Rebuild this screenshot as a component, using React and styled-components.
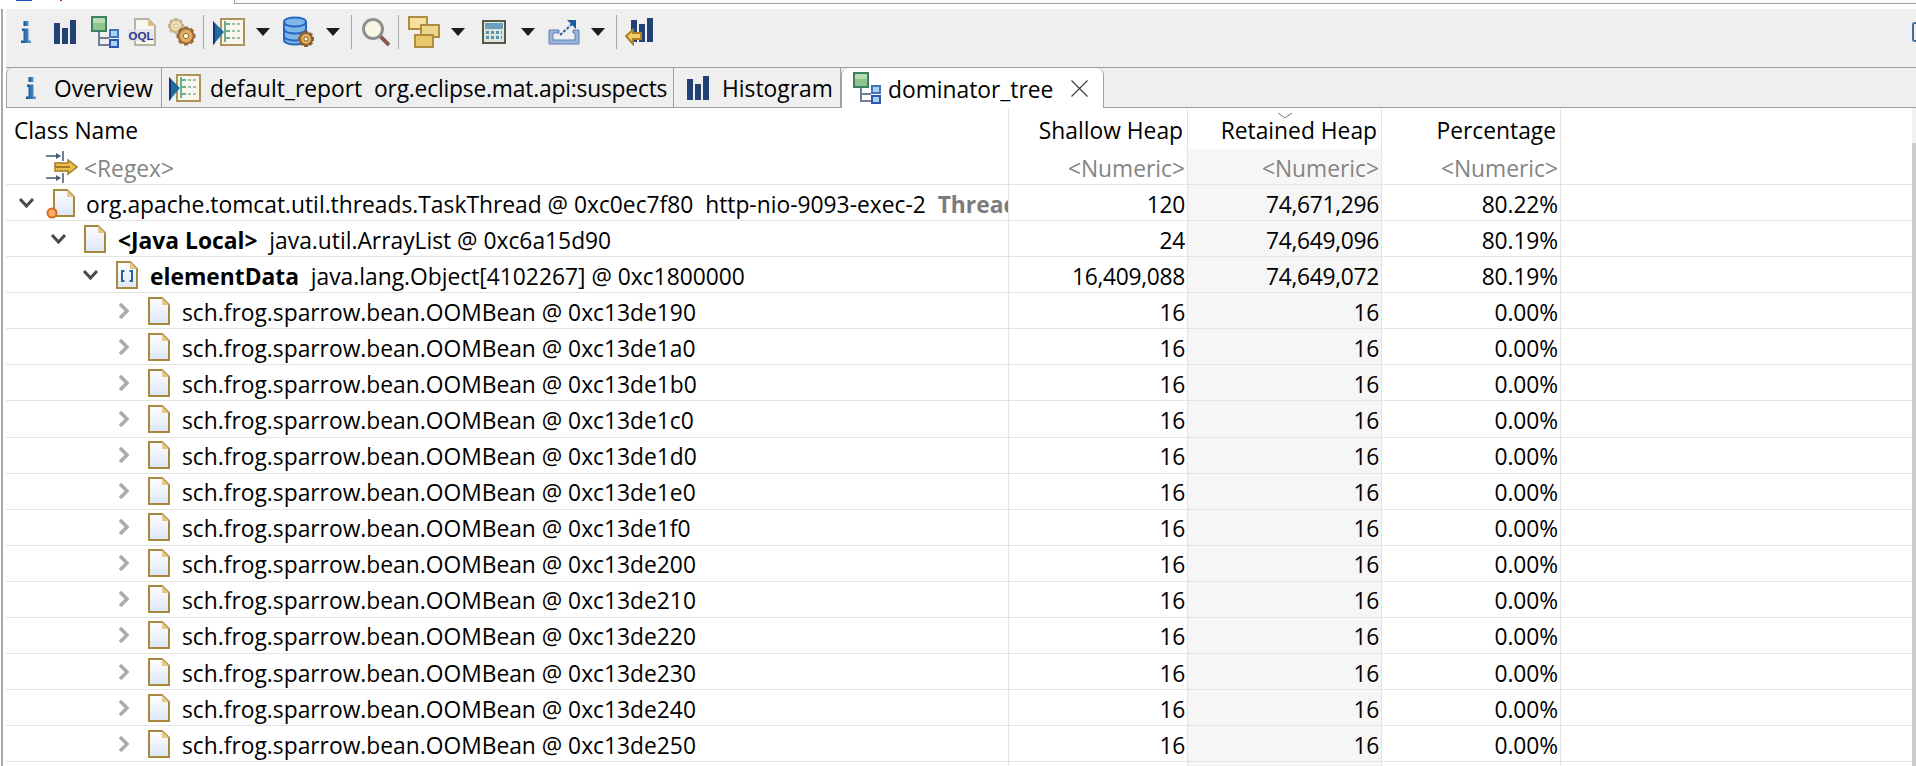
import React from 'react';
import styled, { createGlobalStyle } from 'styled-components';

const GlobalStyle = createGlobalStyle`
  html, body { margin: 0; padding: 0; background: #fff; }
  body { width: 1916px; height: 766px; overflow: hidden; }
`;

const FONT = `"Open Sans", "Noto Sans", "Liberation Sans", sans-serif`;
const TEXT_SIZE = '22.8px';

const Window = styled.div`
  width: 1916px;
  height: 766px;
  overflow: hidden;
  background: #fff;
  font-family: ${FONT};
  color: #000;
  display: flex;
  flex-direction: column;
`;

const TopStrip = styled.div`
  height: 9px;
  flex: none;
  display: flex;
  background: #fff;
`;

const TopMark = styled.div`
  flex: none;
  height: 1px;
  margin-left: ${p => p.$ml}px;
  width: ${p => p.$w}px;
  background: ${p => p.$color};
`;

const TopTab = styled.div`
  height: 4px;
  flex: 1;
  margin-left: 172px;
  box-sizing: border-box;
  border-left: 1px solid #a0a0a0;
  border-bottom: 1px solid #a0a0a0;
  background: #fafafa;
`;

const Body = styled.div`
  flex: 1;
  min-height: 0;
  margin-left: 1px;
  border-left: 2px solid #a9a9a9;
  padding-left: 3px;
  display: flex;
  flex-direction: column;
`;

const Toolbar = styled.div`
  height: 58px;
  flex: none;
  background: #efefef;
  display: flex;
  align-items: center;
  padding-bottom: 12px;
  box-sizing: border-box;
  overflow: hidden;
`;

const ToolSlot = styled.div`
  flex: none;
  margin-left: ${p => p.$ml}px;
  display: flex;
  align-items: center;
  justify-content: center;
`;

const ToolSep = styled.div`
  flex: none;
  width: 1px;
  height: 34px;
  background: #a8a8a8;
  margin-left: ${p => p.$ml}px;
`;

const Caret = styled.div`
  flex: none;
  margin-left: ${p => p.$ml}px;
  width: 0;
  height: 0;
  border-left: 7px solid transparent;
  border-right: 7px solid transparent;
  border-top: 8px solid #1c1c1c;
`;

const EdgeIcon = styled.div`
  flex: none;
  margin-left: auto;
  width: 4px;
  height: 20px;
  box-sizing: border-box;
  border: 2px solid #3f6f9f;
  border-right: none;
  border-radius: 3px 0 0 3px;
`;

const TabBar = styled.div`
  height: 41px;
  flex: none;
  box-sizing: border-box;
  background: #efefef;
  border-top: 1px solid #a0a0a0;
  border-bottom: 1px solid #a0a0a0;
  display: flex;
  font-size: ${TEXT_SIZE};
`;

const Tab = styled.div`
  flex: none;
  width: ${p => p.$w}px;
  height: 39px;
  box-sizing: border-box;
  display: flex;
  align-items: center;
  padding-left: ${p => p.$pl}px;
  border-right: 1px solid #a0a0a0;
  white-space: pre;
  ${p => p.$first && 'border-top-left-radius: 6px; border-left: 1px solid #a0a0a0;'}
`;

const ActiveTab = styled.div`
  flex: none;
  width: 263px;
  height: 40px;
  box-sizing: border-box;
  position: relative;
  z-index: 1;
  background: #fff;
  border-left: 1px solid #a0a0a0;
  border-right: 1px solid #a0a0a0;
  border-top-left-radius: 7px;
  border-top-right-radius: 7px;
  display: flex;
  align-items: center;
  padding-left: 11px;
`;

const TabLabel = styled.span`
  margin-left: ${p => p.$ml}px;
  padding-top: 3px;
  line-height: 36px;
`;

const TightText = styled.span`
  letter-spacing: -0.2px;
`;

const TableWrap = styled.div`
  flex: 1;
  min-height: 0;
  display: flex;
  overflow: hidden;
`;

const Table = styled.div`
  flex: 1;
  min-width: 0;
  font-size: ${TEXT_SIZE};
`;

const Scrollbar = styled.div`
  width: 4px;
  flex: none;
  background: #f1f1f1;
  display: flex;
  flex-direction: column;
  padding-top: 35px;
`;

const ScrollThumb = styled.div`
  flex: 1;
  background: #cdcdcd;
`;

const Row = styled.div`
  display: grid;
  grid-template-columns: 1003px 179px 194px 179px 1fr;
  height: ${p => p.$h}px;
  box-sizing: border-box;
  border-bottom: ${p => (p.$line ? '1px solid #e4e4e4' : 'none')};
`;

const Cell = styled.div`
  box-sizing: border-box;
  border-right: 1px solid #e4e4e4;
  display: flex;
  align-items: center;
  justify-content: ${p => (p.$left ? 'flex-start' : 'flex-end')};
  white-space: pre;
  overflow: hidden;
  padding-right: ${p => (p.$left ? 0 : 2)}px;
  padding-left: ${p => p.$pl || 0}px;
  background: ${p => (p.$shade ? '#f6f6f6' : 'transparent')};
  color: ${p => (p.$muted ? '#858585' : '#000')};
`;

const CellText = styled.span`
  padding-top: 3px;
  flex: none;
  letter-spacing: ${p => p.$ls || 0}px;
`;

const HeadCell = styled(Cell)`
  padding-right: ${p => (p.$left ? 0 : 4)}px;
  position: relative;
`;

const SortMark = styled.svg`
  position: absolute;
  top: 4px;
  left: 89px;
`;

const Chevron = styled.svg`
  flex: none;
  margin-right: ${p => p.$mr}px;
`;

const IconSlot = styled.span`
  flex: none;
  display: flex;
  width: ${p => p.$w}px;
  margin-right: ${p => p.$mr}px;
`;

const Bold = styled.b`
  font-weight: 700;
`;

const FadeText = styled.b`
  font-weight: 700;
  color: #7c7c7c;
`;

const CloseGlyph = styled.svg`
  flex: none;
  margin-left: 18px;
`;

// --- toolbar and tree icons ---

const InfoIcon = ({ size = 22 }) => (
  <svg width={10} height={size} viewBox="0 0 10 22">
    <defs>
      <linearGradient id="ig" x1="0" x2="1" y1="0" y2="0">
        <stop offset="0" stopColor="#0f4d92" />
        <stop offset="1" stopColor="#5d9bd0" />
      </linearGradient>
    </defs>
    <rect x="2.5" y="0" width="5" height="5" fill="url(#ig)" />
    <path d="M1 7.500h6.500v12H10V22H0v-2.500h2.500v-9.500H1z" fill="url(#ig)" />
  </svg>
);

const BarsIcon = ({ w = 22, h = 24 }) => (
  <svg width={w} height={h} viewBox="0 0 22 24" shapeRendering="crispEdges">
    <rect x="0" y="3" width="6" height="21" fill="#214273" />
    <rect x="8" y="8" width="6" height="16" fill="#214273" />
    <rect x="16" y="0" width="6" height="24" fill="#214273" />
  </svg>
);

const TreeIcon = ({ w = 28, h = 32 }) => (
  <svg width={w} height={h} viewBox="0 0 28 32" shapeRendering="crispEdges">
    <path d="M8 16v13h10M8 22h10" fill="none" stroke="#6e7f92" strokeWidth="2" />
    <rect x="1" y="1" width="14" height="14" fill="#8fc58f" stroke="#3b8060" strokeWidth="2" />
    <rect x="2" y="2" width="12" height="5" fill="#b7dcb0" />
    <rect x="19" y="14" width="8" height="7" fill="#a9d4ef" stroke="#4376c0" strokeWidth="2" />
    <rect x="19" y="24" width="8" height="7" fill="#a9d4ef" stroke="#2f57b0" strokeWidth="2" />
  </svg>
);

const OqlIcon = () => (
  <svg width={28} height={28} viewBox="0 0 28 28">
    <path d="M7 1h13l7 7v19H7z" fill="#f7f7f2" stroke="#b9b3a4" strokeWidth="2" />
    <path d="M20 1l7 7h-7z" fill="#d9c27f" />
    <rect x="0" y="11" width="26" height="12" fill="#dfe0ea" opacity="0.7" />
    <text x="0.500" y="22" fontFamily="Liberation Sans, sans-serif" fontWeight="700" fontSize="11.500" fill="#2e3a86" textLength="25" lengthAdjust="spacingAndGlyphs">OQL</text>
  </svg>
);

const Gear = ({ cx, cy, r, fill, rim }) => {
  const teeth = [0, 45, 90, 135, 180, 225, 270, 315];
  return (
    <g>
      {teeth.map(a => (
        <rect key={a} x={cx - 2} y={cy - r - 2} width="4" height="4" fill={rim} transform={`rotate(${a} ${cx} ${cy})`} />
      ))}
      <circle cx={cx} cy={cy} r={r} fill={fill} stroke={rim} strokeWidth="2" />
      <circle cx={cx} cy={cy} r={r * 0.35} fill="#fff8e0" stroke={rim} strokeWidth="1" />
    </g>
  );
};

const GearsIcon = () => (
  <svg width={30} height={30} viewBox="0 0 30 30">
    <Gear cx="9" cy="9" r="6" fill="#f0e3b8" rim="#c8b48a" />
    <Gear cx="19" cy="19" r="7.500" fill="#e0b060" rim="#9a6a3c" />
  </svg>
);

const ReportIcon = ({ w = 32, h = 28 }) => (
  <svg width={w} height={h} viewBox="0 0 32 28" shapeRendering="crispEdges">
    <rect x="8" y="1" width="23" height="26" fill="#f7f7ee" stroke="#ae9454" strokeWidth="2" />
    <path d="M12 3v21M12 6h5M12 13h5M12 20h5" stroke="#6fae8a" strokeWidth="2" fill="none" />
    <path d="M19 6h8M19 13h8M19 20h8" stroke="#9dbfae" strokeWidth="1.500" strokeDasharray="3 2" fill="none" />
    <path d="M0 3l11 11L0 27z" fill="#1d6d9c" shapeRendering="auto" />
    <path d="M0 3v24l2-2V6z" fill="#14307e" shapeRendering="auto" />
  </svg>
);

const DbIcon = () => (
  <svg width={32} height={32} viewBox="0 0 32 32">
    <path d="M1 6c0-6 22-6 22 0v18c0 6-22 6-22 0z" fill="#7db8ea" stroke="#2867c0" strokeWidth="2" />
    <path d="M1 6c0 6 22 6 22 0M1 13c0 6 22 6 22 0M1 20c0 6 22 6 22 0" fill="none" stroke="#2867c0" strokeWidth="2" />
    <Gear cx="23" cy="23" r="6" fill="#e0b060" rim="#8a6032" />
  </svg>
);

const SearchIcon = () => (
  <svg width={28} height={28} viewBox="0 0 28 28">
    <line x1="17" y1="17" x2="27" y2="27" stroke="#8a5a4a" strokeWidth="4" />
    <circle cx="11" cy="11" r="9.500" fill="#f8f6e4" stroke="#8f8f8f" strokeWidth="3" />
  </svg>
);

const StacksIcon = () => (
  <svg width={32} height={32} viewBox="0 0 32 32" shapeRendering="crispEdges">
    <rect x="1" y="1" width="18" height="12" fill="#f3e1a0" stroke="#b08c3e" strokeWidth="2" />
    <rect x="13" y="9" width="18" height="12" fill="#ecd68c" stroke="#b08c3e" strokeWidth="2" />
    <rect x="7" y="19" width="18" height="12" fill="#e5c76c" stroke="#b08c3e" strokeWidth="2" />
  </svg>
);

const CalcIcon = () => (
  <svg width={24} height={24} viewBox="0 0 24 24" shapeRendering="crispEdges">
    <rect x="1" y="1" width="22" height="22" fill="#dbe6dc" stroke="#56594a" strokeWidth="2" />
    <rect x="3" y="3" width="18" height="6" fill="#6aa0bc" />
    <path d="M4 12h16M4 17h16" stroke="#5a93b0" strokeWidth="3" strokeDasharray="3 2" fill="none" />
  </svg>
);

const ExportIcon = () => (
  <svg width={32} height={26} viewBox="0 0 32 26">
    <path d="M1 11h10v3H5v7h22v-7h-2v-3h6v14H1z" fill="#9db4d8" stroke="#5b7eb8" strokeWidth="1" />
    <path d="M12 16L24 5" stroke="#2d5d9c" strokeWidth="2" strokeDasharray="3 1.500" />
    <path d="M19 1h9v9z" fill="#1d5f9e" />
  </svg>
);

const HeapArrowIcon = () => (
  <svg width={28} height={28} viewBox="0 0 28 28">
    <g shapeRendering="crispEdges">
      <rect x="6" y="2" width="6" height="22" fill="#214273" />
      <rect x="14" y="6" width="6" height="18" fill="#214273" />
      <rect x="22" y="0" width="6" height="24" fill="#214273" />
    </g>
    <path d="M1 18l7-6v3h8v6H8v5z" fill="#f1ce68" stroke="#b17d25" strokeWidth="2" />
  </svg>
);

const FilterIcon = () => (
  <svg width={32} height={32} viewBox="0 0 32 32">
    <g shapeRendering="crispEdges">
      <path d="M0 5h14M0 27h14" stroke="#6f8194" strokeWidth="2" />
      <path d="M17 0v10M17 22v10" stroke="#6f8194" strokeWidth="2" />
    </g>
    <path d="M10 2l5 3-5 3zM10 24l5 3-5 3z" fill="#4a5a6a" />
    <path d="M9 12h13v-3l9 7-9 7v-3H9z" fill="#e9bf52" stroke="#a97a20" strokeWidth="1.500" />
    <path d="M9 16h15" stroke="#a97a20" strokeWidth="2" />
  </svg>
);

const FileIcon = ({ variant }) => (
  <svg width={variant === 'thread' ? 28 : 22} height={28} viewBox={variant === 'thread' ? '-6 0 28 28' : '0 0 22 28'} overflow="visible">
    <defs>
      <linearGradient id={`fg-${variant || 'p'}`} x1="0" x2="0" y1="0" y2="1">
        <stop offset="0" stopColor="#ffffff" />
        <stop offset="1" stopColor="#dce6f6" />
      </linearGradient>
    </defs>
    <path d="M1 1h13l7 7v19H1z" fill={`url(#fg-${variant || 'p'})`} stroke="#a8883e" strokeWidth="2" />
    <path d="M14 1l7 7h-7z" fill="#e5c98a" />
    {variant === 'array' && (
      <path d="M8.500 10H6v10h2.500M13.500 10H16v10h-2.500" fill="none" stroke="#2c6299" strokeWidth="2" />
    )}
    {variant === 'thread' && (
      <circle cx="-1" cy="24" r="4.500" fill="#f4b070" stroke="#d9691c" strokeWidth="2" />
    )}
  </svg>
);

const ChevronDown = ({ mr }) => (
  <Chevron $mr={mr} width="17" height="12" viewBox="0 0 17 12">
    <path d="M2 2l6.500 7L15 2" fill="none" stroke="#4a4a4a" strokeWidth="3" />
  </Chevron>
);

const ChevronRight = () => (
  <Chevron $mr={18} width="12" height="18" viewBox="0 0 12 18">
    <path d="M2 2l7 7-7 7" fill="none" stroke="#ababab" strokeWidth="3.500" />
  </Chevron>
);

const CloseIcon = () => (
  <CloseGlyph width="17" height="17" viewBox="0 0 17 17">
    <path d="M0.500 0.500l16 16M16.500 0.500l-16 16" stroke="#3a3a3a" strokeWidth="1.100" />
  </CloseGlyph>
);

const beans = ['190', '1a0', '1b0', '1c0', '1d0', '1e0', '1f0', '200', '210', '220', '230', '240', '250', '260'];

const topRows = [
  { level: 0, open: true, variant: 'thread', text: <>org.apache.tomcat.util.threads.TaskThread @ 0xc0ec7f80  http-nio-9093-exec-2  <FadeText>Thread</FadeText></>, shallow: '120', retained: '74,671,296', pct: '80.22%' },
  { level: 1, open: true, text: <><Bold>&lt;Java Local&gt;</Bold>  java.util.ArrayList @ 0xc6a15d90</>, shallow: '24', retained: '74,649,096', pct: '80.19%' },
  { level: 2, open: true, variant: 'array', text: <><Bold>elementData</Bold>  java.lang.Object[4102267] @ 0xc1800000</>, shallow: '16,409,088', retained: '74,649,072', pct: '80.19%' },
];

const TreeRow = ({ row }) => {
  const isThread = row.variant === 'thread';
  return (
    <Row $h={36.08} $line>
      <Cell $left $pl={row.open ? 12 + row.level * 32 : 112}>
        {row.open ? <ChevronDown mr={isThread ? 12 : 17} /> : <ChevronRight />}
        <IconSlot $w={isThread ? 28 : 22} $mr={isThread ? 11 : 12}>
          <FileIcon variant={row.variant} />
        </IconSlot>
        <CellText>{row.text}</CellText>
      </Cell>
      <Cell><CellText $ls={-0.3}>{row.shallow}</CellText></Cell>
      <Cell $shade><CellText $ls={-0.3}>{row.retained}</CellText></Cell>
      <Cell><CellText $ls={-0.1}>{row.pct}</CellText></Cell>
      <div />
    </Row>
  );
};

export default function App() {
  const rows = [
    ...topRows,
    ...beans.map(b => ({ level: 3, text: `sch.frog.sparrow.bean.OOMBean @ 0xc13de${b}`, shallow: '16', retained: '16', pct: '0.00%' })),
  ];

  return (
    <Window>
      <GlobalStyle />
      <TopStrip>
        <TopMark $ml={16} $w={16} $color="#1f4fc0" />
        <TopMark $ml={28} $w={2} $color="#b02020" />
        <TopTab />
      </TopStrip>
      <Body>
        <Toolbar>
          <ToolSlot $ml={15}><InfoIcon /></ToolSlot>
          <ToolSlot $ml={23}><BarsIcon /></ToolSlot>
          <ToolSlot $ml={15}><TreeIcon /></ToolSlot>
          <ToolSlot $ml={9}><OqlIcon /></ToolSlot>
          <ToolSlot $ml={11}><GearsIcon /></ToolSlot>
          <ToolSep $ml={6} />
          <ToolSlot $ml={9}><ReportIcon /></ToolSlot>
          <Caret $ml={11} />
          <ToolSlot $ml={13}><DbIcon /></ToolSlot>
          <Caret $ml={11} />
          <ToolSep $ml={11} />
          <ToolSlot $ml={10}><SearchIcon /></ToolSlot>
          <ToolSep $ml={8} />
          <ToolSlot $ml={9}><StacksIcon /></ToolSlot>
          <Caret $ml={11} />
          <ToolSlot $ml={17}><CalcIcon /></ToolSlot>
          <Caret $ml={15} />
          <ToolSlot $ml={13}><ExportIcon /></ToolSlot>
          <Caret $ml={11} />
          <ToolSep $ml={11} />
          <ToolSlot $ml={8}><HeapArrowIcon /></ToolSlot>
          <EdgeIcon />
        </Toolbar>
        <TabBar>
          <Tab $first $w={156} $pl={19}>
            <InfoIcon />
            <TabLabel $ml={18}>Overview</TabLabel>
          </Tab>
          <Tab $w={512} $pl={7}>
            <ReportIcon w={32} h={28} />
            <TabLabel $ml={9}>default_report  <TightText>org.eclipse.mat.api:suspects</TightText></TabLabel>
          </Tab>
          <Tab $w={167} $pl={13}>
            <BarsIcon />
            <TabLabel $ml={13}>Histogram</TabLabel>
          </Tab>
          <ActiveTab>
            <TreeIcon />
            <TabLabel $ml={7}>dominator_tree</TabLabel>
            <CloseIcon />
          </ActiveTab>
        </TabBar>
        <TableWrap>
          <Table>
            <Row $h={41}>
              <HeadCell $left $pl={8}><CellText>Class Name</CellText></HeadCell>
              <HeadCell><CellText>Shallow Heap</CellText></HeadCell>
              <HeadCell>
                <SortMark width="16" height="7" viewBox="0 0 16 7"><path d="M1 1l7 5 7-5" fill="none" stroke="#777" strokeWidth="1" /></SortMark>
                <CellText>Retained Heap</CellText>
              </HeadCell>
              <HeadCell><CellText>Percentage</CellText></HeadCell>
              <div />
            </Row>
            <Row $h={36} $line>
              <Cell $left $muted $pl={40}>
                <IconSlot $w={32} $mr={6}><FilterIcon /></IconSlot>
                <CellText>&lt;Regex&gt;</CellText>
              </Cell>
              <Cell $muted><CellText>&lt;Numeric&gt;</CellText></Cell>
              <Cell $muted $shade><CellText>&lt;Numeric&gt;</CellText></Cell>
              <Cell $muted><CellText>&lt;Numeric&gt;</CellText></Cell>
              <div />
            </Row>
            {rows.map((row, i) => <TreeRow key={i} row={row} />)}
          </Table>
          <Scrollbar><ScrollThumb /></Scrollbar>
        </TableWrap>
      </Body>
    </Window>
  );
}
